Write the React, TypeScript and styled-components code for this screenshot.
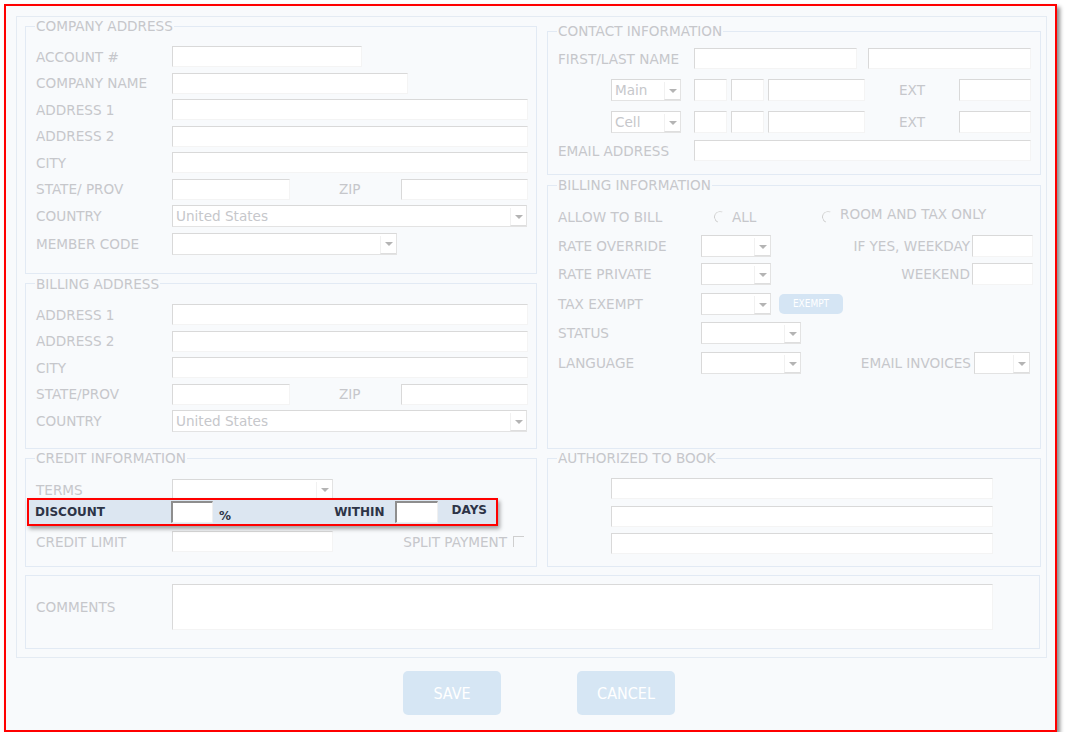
import React from "react";
import styled, { createGlobalStyle } from "styled-components";

const GlobalStyle = createGlobalStyle`
  * { box-sizing: border-box; }
  html, body { margin: 0; padding: 0; background: #fff; }
  body {
    font-family: "DejaVu Sans", Verdana, sans-serif;
    font-size: 13.6px;
    color: #c6c7cb;
  }
`;

const Frame = styled.div`
  margin: 4px 0 0 4px;
  width: 1053px;
  height: 728px;
  border: 2px solid #f00;
  background: #f8fafc;
  box-shadow: 3px 3px 4px rgba(0, 0, 0, 0.45);
  padding: 10px 8px 0 10px;
  display: flex;
  flex-direction: column;
`;

const Panel = styled.div`
  border: 1px solid #e4ebf3;
  padding: 1px 6px 8px 8px;
  display: flex;
  flex-direction: column;
`;

const Grid = styled.div<{ $mt?: number }>`
  display: grid;
  grid-template-columns: 512px 494px;
  column-gap: 10px;
  margin-top: ${(p) => p.$mt ?? 0}px;
`;

const Column = styled.div<{ $offset?: number }>`
  display: flex;
  flex-direction: column;
  gap: 2px;
  padding-top: ${(p) => p.$offset ?? 0}px;
`;

const Group = styled.fieldset<{ $pt: number; $pb: number; $pr?: number; $grow?: boolean; $mt?: number }>`
  margin: ${(p) => p.$mt ?? 0}px 0 0 0;
  min-width: 0;
  border: 1px solid #e2eaf4;
  padding: ${(p) => p.$pt}px ${(p) => p.$pr ?? 8}px ${(p) => p.$pb}px 10px;
  flex: ${(p) => (p.$grow ? "1" : "none")};
`;

const Legend = styled.legend`
  padding: 0 1px;
  margin-left: -1px;
  font-size: 13.6px;
  line-height: 16px;
  color: #c6c7cb;
`;

const Rows = styled.div<{ $gap?: number }>`
  display: flex;
  flex-direction: column;
  gap: ${(p) => p.$gap ?? 0}px;
`;

const Row = styled.div<{ $h?: number; $mt?: number; $indent?: number }>`
  display: flex;
  align-items: center;
  height: ${(p) => p.$h ?? 21}px;
  margin-top: ${(p) => p.$mt ?? 0}px;
  padding-left: ${(p) => p.$indent ?? 0}px;
`;

const Label = styled.span<{ $w?: number; $center?: boolean; $right?: boolean; $lift?: number }>`
  flex: ${(p) => (p.$w ? "none" : "1")};
  width: ${(p) => (p.$w ? `${p.$w}px` : "auto")};
  text-align: ${(p) => (p.$center ? "center" : p.$right ? "right" : "left")};
  white-space: nowrap;
  line-height: 16px;
  transform: translateY(${(p) => -(p.$lift ?? 0)}px);
`;

const TextBox = styled.div<{ $w?: number; $ml?: number; $mr?: number }>`
  flex: ${(p) => (p.$w ? "none" : "1")};
  width: ${(p) => (p.$w ? `${p.$w}px` : "auto")};
  height: 100%;
  margin-left: ${(p) => p.$ml ?? 0}px;
  margin-right: ${(p) => p.$mr ?? 0}px;
  background: #fff;
  border-style: solid;
  border-width: 1px;
  border-color: #d9d9d9 #f4f4f4 #f4f4f4 #d9d9d9;
`;

const Memo = styled(TextBox)`
  height: 46px;
`;

const SelectFrame = styled.div<{ $w: number; $ml?: number; $mr?: number }>`
  flex: none;
  display: flex;
  width: ${(p) => p.$w}px;
  height: 100%;
  margin-left: ${(p) => p.$ml ?? 0}px;
  margin-right: ${(p) => p.$mr ?? 0}px;
  background: #fff;
  border-style: solid;
  border-width: 1px;
  border-color: #d9d9d9 #e3e3e3 #e3e3e3 #d9d9d9;
`;

const SelectValue = styled.span`
  flex: 1;
  padding-left: 3px;
  align-self: center;
  white-space: nowrap;
  overflow: hidden;
  color: #c6c7cb;
`;

const SelectArrow = styled.span`
  flex: none;
  width: 16px;
  margin: 2px 0 0 0;
  border-left: 1px solid #f1f1f1;
  border-bottom: 1px solid #dedede;
  display: flex;
  align-items: center;
  justify-content: center;

  &::after {
    content: "";
    border-left: 4px solid transparent;
    border-right: 4px solid transparent;
    border-top: 4px solid #b4b4b4;
  }
`;

type SelectProps = { width: number; value?: string; ml?: number; mr?: number };

const Select = ({ width, value, ml, mr }: SelectProps) => (
  <SelectFrame $w={width} $ml={ml} $mr={mr}>
    <SelectValue>{value}</SelectValue>
    <SelectArrow />
  </SelectFrame>
);

const Radio = styled.span<{ $ml: number }>`
  flex: none;
  width: 12px;
  height: 12px;
  margin: 0 6px 0 ${(p) => p.$ml}px;
  border-radius: 50%;
  border: 1px solid transparent;
  border-left-color: #cfcfcf;
  border-top-color: #dcdcdc;
  transform: rotate(-20deg);
`;

const Check = styled.span`
  flex: none;
  width: 11px;
  height: 11px;
  margin: 0 4px 0 6px;
  border-top: 1px solid #cfcfcf;
  border-left: 1px solid #cfcfcf;
`;

const SmallButton = styled.span`
  flex: none;
  width: 64px;
  height: 20px;
  margin-left: 8px;
  border-radius: 5px;
  background: #d5e5f4;
  color: #fff;
  font-family: "DejaVu Sans Condensed", "Liberation Sans Narrow", "DejaVu Sans", sans-serif;
  font-size: 10px;
  line-height: 20px;
  text-align: center;
`;

const Highlight = styled.div`
  position: relative;
  z-index: 1;
  display: flex;
  align-items: center;
  width: 471px;
  height: 28px;
  margin: -2px 0 0 -9px;
  padding: 0 9px 0 6px;
  background: #dce6f1;
  border: 2px solid #f00;
  box-shadow: 2px 3px 4px rgba(0, 0, 0, 0.35);
  color: #2d3447;
  font-size: 12px;
  font-weight: bold;
`;

const HiText = styled.span<{ $w?: number; $ml?: number; $auto?: boolean; $drop?: number }>`
  flex: none;
  width: ${(p) => (p.$w ? `${p.$w}px` : "auto")};
  margin-left: ${(p) => (p.$auto ? "auto" : `${p.$ml ?? 0}px`)};
  transform: translateY(${(p) => p.$drop ?? 0}px);
  white-space: nowrap;
`;

const HiBox = styled.span<{ $w: number; $ml?: number }>`
  flex: none;
  width: ${(p) => p.$w}px;
  height: 22px;
  margin-left: ${(p) => p.$ml ?? 0}px;
  background: #fff;
  border-style: solid;
  border-width: 2px 1px 1px 2px;
  border-color: #8e8e8e #f0f0f0 #f0f0f0 #8e8e8e;
`;

const CommentRow = styled.div`
  display: flex;
  align-items: center;
`;

const Actions = styled.div`
  display: flex;
  justify-content: center;
  gap: 76px;
  margin-top: 13px;
  padding-left: 15px;
`;

const ActionButton = styled.button`
  width: 98px;
  height: 44px;
  border: none;
  border-radius: 5px;
  background: #d6e6f4;
  color: #fff;
  font-family: "DejaVu Sans Condensed", "Liberation Sans Narrow", "DejaVu Sans", sans-serif;
  font-size: 16px;
  padding: 0;
`;

const AddressRows = ({ state }: { state: string }) => (
  <>
    <Row>
      <Label $w={136}>ADDRESS 1</Label>
      <TextBox />
    </Row>
    <Row>
      <Label $w={136}>ADDRESS 2</Label>
      <TextBox />
    </Row>
    <Row>
      <Label $w={136}>CITY</Label>
      <TextBox />
    </Row>
    <Row>
      <Label $w={136}>{state}</Label>
      <TextBox $w={118} />
      <Label $w={111} $center>
        &nbsp;&nbsp;ZIP
      </Label>
      <TextBox />
    </Row>
    <Row $h={22}>
      <Label $w={136}>COUNTRY</Label>
      <Select width={355} value="United States" />
    </Row>
  </>
);

const PhoneRow = ({ kind, mt }: { kind: string; mt: number }) => (
  <Row $h={22} $mt={mt} $indent={53}>
    <Select width={70} value={kind} mr={13} />
    <TextBox $w={33} />
    <TextBox $w={33} $ml={4} />
    <TextBox $w={97} $ml={4} />
    <Label $w={94} $center>
      EXT
    </Label>
    <TextBox />
  </Row>
);

export default function App() {
  return (
    <>
      <GlobalStyle />
      <Frame>
        <Panel>
          <Grid>
            <Column>
              <Group $pt={12} $pb={18}>
                <Legend>COMPANY ADDRESS</Legend>
                <Rows $gap={5.5}>
                  <Row>
                    <Label $w={136}>ACCOUNT #</Label>
                    <TextBox $w={190} />
                  </Row>
                  <Row>
                    <Label $w={136}>COMPANY NAME</Label>
                    <TextBox $w={236} />
                  </Row>
                  <AddressRows state="STATE/ PROV" />
                  <Row $h={22}>
                    <Label $w={136}>MEMBER CODE</Label>
                    <Select width={225} />
                  </Row>
                </Rows>
              </Group>
              <Group $pt={12.5} $pb={16}>
                <Legend>BILLING ADDRESS</Legend>
                <Rows $gap={5.5}>
                  <AddressRows state="STATE/PROV" />
                </Rows>
              </Group>
            </Column>

            <Column $offset={5}>
              <Group $pt={9} $pb={13} $pr={9}>
                <Legend>CONTACT INFORMATION</Legend>
                <Rows>
                  <Row>
                    <Label $w={136}>FIRST/LAST NAME</Label>
                    <TextBox $w={163} />
                    <TextBox $ml={11} />
                  </Row>
                  <PhoneRow kind="Main" mt={10} />
                  <PhoneRow kind="Cell" mt={10} />
                  <Row $mt={7}>
                    <Label $w={136}>EMAIL ADDRESS</Label>
                    <TextBox />
                  </Row>
                </Rows>
              </Group>
              <Group $pt={13} $pb={10} $pr={7} $grow>
                <Legend>BILLING INFORMATION</Legend>
                <Rows>
                  <Row>
                    <Label $w={143}>ALLOW TO BILL</Label>
                    <Radio $ml={13} />
                    <Label $w={40}>ALL</Label>
                    <Radio $ml={50} />
                    <Label $w={160} $lift={3}>
                      ROOM AND TAX ONLY
                    </Label>
                  </Row>
                  <Row $h={22} $mt={8}>
                    <Label $w={143}>RATE OVERRIDE</Label>
                    <Select width={70} />
                    <Label $right>IF YES, WEEKDAY</Label>
                    <TextBox $w={61} $ml={2} />
                  </Row>
                  <Row $h={22} $mt={6}>
                    <Label $w={143}>RATE PRIVATE</Label>
                    <Select width={70} />
                    <Label $right>WEEKEND</Label>
                    <TextBox $w={61} $ml={2} />
                  </Row>
                  <Row $h={22} $mt={8}>
                    <Label $w={143}>TAX EXEMPT</Label>
                    <Select width={70} />
                    <SmallButton>EXEMPT</SmallButton>
                  </Row>
                  <Row $h={22} $mt={7}>
                    <Label $w={143}>STATUS</Label>
                    <Select width={100} />
                  </Row>
                  <Row $h={22} $mt={8}>
                    <Label $w={143}>LANGUAGE</Label>
                    <Select width={100} />
                    <Label $right>EMAIL INVOICES</Label>
                    <Select width={56} ml={3} mr={3} />
                  </Row>
                </Rows>
              </Group>
            </Column>
          </Grid>

          <Grid $mt={1}>
            <Group $pt={13} $pb={14}>
              <Legend>CREDIT INFORMATION</Legend>
              <Rows>
                <Row>
                  <Label $w={136}>TERMS</Label>
                  <Select width={161} />
                </Row>
                <Highlight>
                  <HiText $w={136}>DISCOUNT</HiText>
                  <HiBox $w={42} />
                  <HiText $ml={6} $drop={4}>
                    %
                  </HiText>
                  <HiText $auto>WITHIN</HiText>
                  <HiBox $w={43} $ml={10} />
                  <HiText $ml={14} $drop={-2}>
                    DAYS
                  </HiText>
                </Highlight>
                <Row $mt={5}>
                  <Label $w={136}>CREDIT LIMIT</Label>
                  <TextBox $w={161} />
                  <Label $right>SPLIT PAYMENT</Label>
                  <Check />
                </Row>
              </Rows>
            </Group>
            <Group $pt={12} $pb={12} $pr={9}>
              <Legend>AUTHORIZED TO BOOK</Legend>
              <Rows $gap={6.5}>
                <Row $indent={53}>
                  <TextBox $w={382} />
                </Row>
                <Row $indent={53}>
                  <TextBox $w={382} />
                </Row>
                <Row $indent={53}>
                  <TextBox $w={382} />
                </Row>
              </Rows>
            </Group>
          </Grid>

          <Group $pt={8} $pb={18} $mt={8}>
            <CommentRow>
              <Label $w={136}>COMMENTS</Label>
              <Memo $w={821} />
            </CommentRow>
          </Group>
        </Panel>

        <Actions>
          <ActionButton type="button">SAVE</ActionButton>
          <ActionButton type="button">CANCEL</ActionButton>
        </Actions>
      </Frame>
    </>
  );
}
